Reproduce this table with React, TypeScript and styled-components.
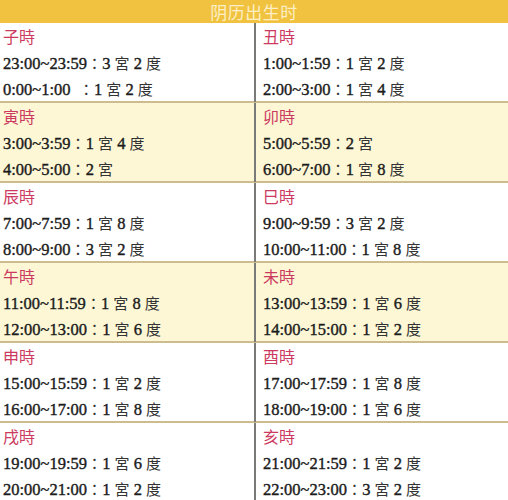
import React from "react";
import styled, { createGlobalStyle } from "styled-components";

const Global = createGlobalStyle`
  html, body { margin: 0; padding: 0; background: #ffffff; }
  body { width: 508px; height: 500px; overflow: hidden; }
`;

const Page = styled.div`
  width: 508px;
  font-family: "Liberation Serif", "Noto Sans CJK TC", serif;
`;

const Header = styled.div`
  height: 23px;
  background: #f1c240;
  color: #fcefc4;
  font-family: "Noto Sans CJK SC", sans-serif;
  font-size: 17px;
  line-height: 23px;
  text-align: center;
  letter-spacing: 0.5px;
  overflow: hidden;
`;

const Row = styled.div<{ $alt: boolean }>`
  display: grid;
  grid-template-columns: 254px 2px 252px;
  height: 78px;
  background: ${(p) => (p.$alt ? "#fdf7d6" : "#ffffff")};
  border-bottom: 2px solid #cdbd8e;
`;

const Divider = styled.div`
  background: #7a7a78;
`;

const Cell = styled.div<{ $right?: boolean }>`
  padding-left: ${(p) => (p.$right ? "7px" : "3px")};
  display: flex;
  flex-direction: column;
`;

const Title = styled.div`
  height: 27px;
  line-height: 27px;
  color: #cc3a60;
  font-family: "Noto Sans CJK SC", sans-serif;
  font-size: 16px;
`;

const Line = styled.div`
  height: 26px;
  line-height: 26px;
  color: #1c1c1c;
  font-size: 16.5px;
  white-space: pre;
  -webkit-text-stroke: 0.4px #1c1c1c;
`;

const Han = styled.span`
  font-family: "Noto Sans CJK TC", sans-serif;
  font-size: 15px;
  -webkit-text-stroke: 0;
  color: #333;
`;

type Entry = { name: string; lines: string[] };

const data: [Entry, Entry][] = [
  [
    { name: "子時", lines: ["23:00~23:59：3 宮 2 度", "0:00~1:00  ：1 宮 2 度"] },
    { name: "丑時", lines: ["1:00~1:59：1 宮 2 度", "2:00~3:00：1 宮 4 度"] },
  ],
  [
    { name: "寅時", lines: ["3:00~3:59：1 宮 4 度", "4:00~5:00：2 宮"] },
    { name: "卯時", lines: ["5:00~5:59：2 宮", "6:00~7:00：1 宮 8 度"] },
  ],
  [
    { name: "辰時", lines: ["7:00~7:59：1 宮 8 度", "8:00~9:00：3 宮 2 度"] },
    { name: "巳時", lines: ["9:00~9:59：3 宮 2 度", "10:00~11:00：1 宮 8 度"] },
  ],
  [
    { name: "午時", lines: ["11:00~11:59：1 宮 8 度", "12:00~13:00：1 宮 6 度"] },
    { name: "未時", lines: ["13:00~13:59：1 宮 6 度", "14:00~15:00：1 宮 2 度"] },
  ],
  [
    { name: "申時", lines: ["15:00~15:59：1 宮 2 度", "16:00~17:00：1 宮 8 度"] },
    { name: "酉時", lines: ["17:00~17:59：1 宮 8 度", "18:00~19:00：1 宮 6 度"] },
  ],
  [
    { name: "戌時", lines: ["19:00~19:59：1 宮 6 度", "20:00~21:00：1 宮 2 度"] },
    { name: "亥時", lines: ["21:00~21:59：1 宮 2 度", "22:00~23:00：3 宮 2 度"] },
  ],
];

function renderLine(text: string) {
  const parts = text.split(/([宮度：])/);
  return parts.map((p, i) =>
    p === "宮" || p === "度" || p === "：" ? <Han key={i}>{p}</Han> : <React.Fragment key={i}>{p}</React.Fragment>
  );
}

function CellView({ e, right }: { e: Entry; right?: boolean }) {
  return (
    <Cell $right={right}>
      <Title>{e.name}</Title>
      {e.lines.map((l, i) => (
        <Line key={i}>{renderLine(l)}</Line>
      ))}
    </Cell>
  );
}

export default function App() {
  return (
    <Page>
      <Global />
      <Header>阴历出生时</Header>
      {data.map((pair, i) => (
        <Row key={i} $alt={i === 1 || i === 3}>
          <CellView e={pair[0]} />
          <Divider />
          <CellView e={pair[1]} right />
        </Row>
      ))}
    </Page>
  );
}
